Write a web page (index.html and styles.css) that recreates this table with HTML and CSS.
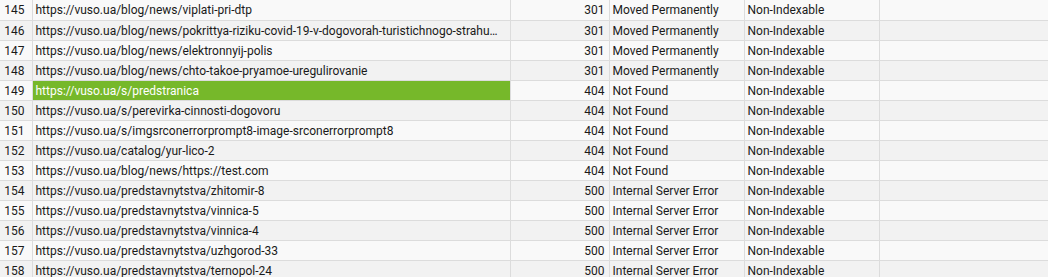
FILE: index.html
```html
<!DOCTYPE html>
<html>
<head>
<meta charset="utf-8">
<link rel="stylesheet" href="styles.css">
</head>
<body>
<table class="grid">
<colgroup>
<col class="c-num"><col class="c-url"><col class="c-code"><col class="c-status"><col class="c-idx"><col class="c-rest">
</colgroup>
<tbody>
<tr><td class="num">145</td><td class="url">https://vuso.ua/blog/news/viplati-pri-dtp</td><td class="code">301</td><td>Moved Permanently</td><td>Non-Indexable</td><td></td></tr>
<tr><td class="num">146</td><td class="url">https://vuso.ua/blog/news/pokrittya-riziku-covid-19-v-dogovorah-turistichnogo-strahuvannya</td><td class="code">301</td><td>Moved Permanently</td><td>Non-Indexable</td><td></td></tr>
<tr><td class="num">147</td><td class="url">https://vuso.ua/blog/news/elektronnyij-polis</td><td class="code">301</td><td>Moved Permanently</td><td>Non-Indexable</td><td></td></tr>
<tr><td class="num">148</td><td class="url">https://vuso.ua/blog/news/chto-takoe-pryamoe-uregulirovanie</td><td class="code">301</td><td>Moved Permanently</td><td>Non-Indexable</td><td></td></tr>
<tr><td class="num">149</td><td class="url sel">https://vuso.ua/s/predstranica</td><td class="code">404</td><td>Not Found</td><td>Non-Indexable</td><td></td></tr>
<tr><td class="num">150</td><td class="url">https://vuso.ua/s/perevirka-cinnosti-dogovoru</td><td class="code">404</td><td>Not Found</td><td>Non-Indexable</td><td></td></tr>
<tr><td class="num">151</td><td class="url">https://vuso.ua/s/imgsrconerrorprompt8-image-srconerrorprompt8</td><td class="code">404</td><td>Not Found</td><td>Non-Indexable</td><td></td></tr>
<tr><td class="num">152</td><td class="url">https://vuso.ua/catalog/yur-lico-2</td><td class="code">404</td><td>Not Found</td><td>Non-Indexable</td><td></td></tr>
<tr><td class="num">153</td><td class="url">https://vuso.ua/blog/news/https://test.com</td><td class="code">404</td><td>Not Found</td><td>Non-Indexable</td><td></td></tr>
<tr><td class="num">154</td><td class="url">https://vuso.ua/predstavnytstva/zhitomir-8</td><td class="code">500</td><td>Internal Server Error</td><td>Non-Indexable</td><td></td></tr>
<tr><td class="num">155</td><td class="url">https://vuso.ua/predstavnytstva/vinnica-5</td><td class="code">500</td><td>Internal Server Error</td><td>Non-Indexable</td><td></td></tr>
<tr><td class="num">156</td><td class="url">https://vuso.ua/predstavnytstva/vinnica-4</td><td class="code">500</td><td>Internal Server Error</td><td>Non-Indexable</td><td></td></tr>
<tr><td class="num">157</td><td class="url">https://vuso.ua/predstavnytstva/uzhgorod-33</td><td class="code">500</td><td>Internal Server Error</td><td>Non-Indexable</td><td></td></tr>
<tr><td class="num">158</td><td class="url">https://vuso.ua/predstavnytstva/ternopol-24</td><td class="code">500</td><td>Internal Server Error</td><td>Non-Indexable</td><td></td></tr>
</tbody>
</table>
</body>
</html>
```
FILE: styles.css
```css
html, body {
  margin: 0;
  padding: 0;
  background: #f9f9f9;
  overflow: hidden;
}
.grid {
  border-collapse: collapse;
  table-layout: fixed;
  width: 1048px;
  font-family: Roboto, "Liberation Sans", sans-serif;
  font-size: 12px;
  color: #1a1a1a;
}
.c-num { width: 32px; }
.c-url { width: 478px; }
.c-code { width: 99px; }
.c-status { width: 135px; }
.c-idx { width: 135px; }
.c-rest { width: auto; }
.grid tr:nth-child(odd) td { background: #f9f9f9; }
.grid tr:nth-child(even) td { background: #f2f2f2; }
.grid td {
  height: 20px;
  padding: 1px 3px 0 3px;
  border-right: 1px solid #dcdcdc;
  border-bottom: 1px solid #dcdcdc;
  white-space: nowrap;
  overflow: hidden;
  text-overflow: ellipsis;
  line-height: 18px;
  box-sizing: border-box;
}
.grid td:last-child { border-right: none; }
.grid td.num { text-align: right; padding: 1px 7px 0 0; text-overflow: clip; }
.grid td.url { padding-right: 9px; }
.grid td.code { text-align: right; padding-right: 4px; }
.grid tr td.url.sel { background: #76b82a; color: #ffffff; }
```
